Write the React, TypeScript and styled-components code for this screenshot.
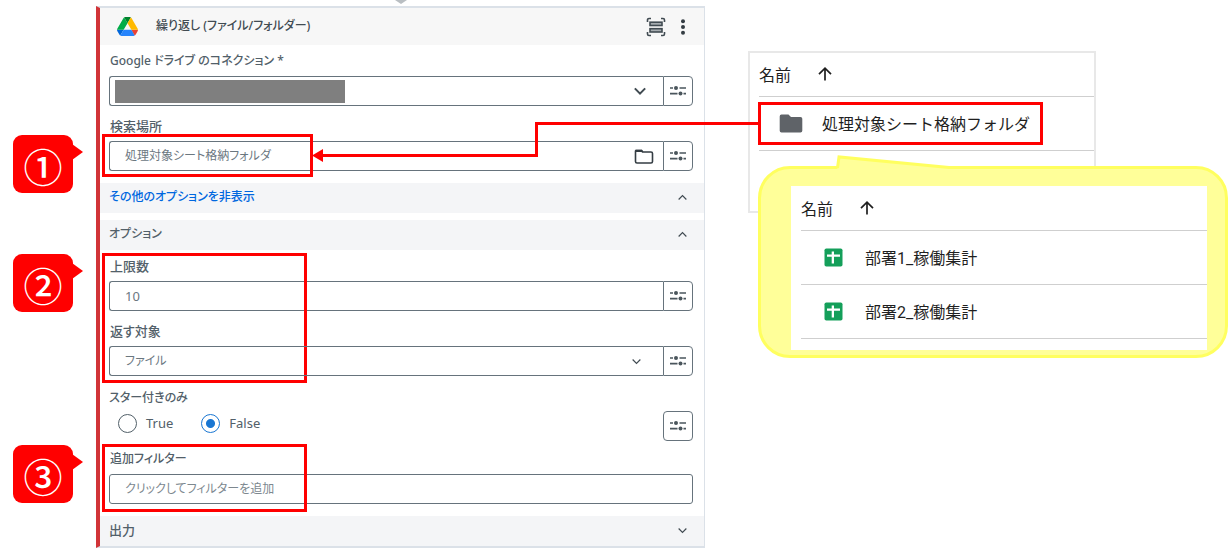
import React from "react";
import styled, { createGlobalStyle, css } from "styled-components";

const Global = createGlobalStyle`
  *, *::before, *::after { box-sizing: border-box; }
  body {
    margin: 0;
    background: #fff;
    font-family: "Noto Sans", "Noto Sans CJK JP", sans-serif;
    color: #526069;
  }
  button { font: inherit; color: inherit; padding: 0; margin: 0; cursor: pointer; }
  table { border-collapse: collapse; }
`;

const RED = "#ff0000";
const LINE = "#66737c";

const Page = styled.main`
  position: relative;
  display: grid;
  grid-template-columns: minmax(420px, 1fr) 480px;
  column-gap: 43px;
  align-items: start;
  padding: 6px 0 3px 96px;
  overflow: hidden;
`;

const StepArrow = styled.svg`
  position: absolute;
  top: 0;
  left: 395px;
`;

/* ---------- activity card ---------- */

const Card = styled.section`
  border: 1px solid #dbe1e8;
  border-top-width: 2px;
  border-bottom-width: 2px;
  border-left: 4px solid #d13438;
  background: #fff;
  font-size: 12px;
  font-feature-settings: "palt";
  line-height: 20px;
`;

const CardHeader = styled.header`
  display: flex;
  align-items: center;
  height: 37px;
  padding: 0 10px 0 17px;
  background: #f7f7f7;
`;

const CardTitle = styled.h1`
  flex: 1;
  margin: 0 0 0 18px;
  padding-bottom: 2px;
  font-size: 12px;
  font-weight: 500;
  color: #414b52;
`;

const IconButton = styled.button`
  display: grid;
  place-items: center;
  height: 24px;
  width: 22px;
  margin-left: 5px;
  border: 0;
  background: none;
`;

const Fields = styled.div`
  display: flex;
  flex-direction: column;
  gap: 11px;
  padding: 7px 11px 12px 9px;
`;

const Field = styled.div`
  position: relative;
  display: flex;
  flex-direction: column;
  gap: 4px;
`;

const Label = styled.label<{ $large?: boolean }>`
  height: 20px;
  padding-left: 1px;
  font-size: ${(p) => (p.$large ? 13 : 12)}px;
  line-height: 18px;
  font-weight: 500;
`;

const Row = styled.div`
  display: flex;
  height: 30px;
`;

const Box = styled.div<{ $alone?: boolean }>`
  flex: 1;
  min-width: 0;
  display: flex;
  align-items: center;
  border: 1px solid ${LINE};
  border-radius: ${(p) => (p.$alone ? "3px" : "3px 0 0 3px")};
  border-right-width: ${(p) => (p.$alone ? "1px" : "0")};
  padding: 0 8px 0 15px;
`;

const controlText = css`
  flex: 1;
  min-width: 0;
  height: 20px;
  padding: 0 0 1px;
  border: 0;
  outline: 0;
  background: transparent;
  font: inherit;
  font-feature-settings: inherit;
  color: #6b777f;
  &::placeholder { color: #7d888f; opacity: 1; }
`;

const TextInput = styled.input<{ $large?: boolean }>`
  ${controlText}
  font-size: ${(p) => (p.$large ? 13 : 12)}px;
`;

const Select = styled.select`
  ${controlText}
  appearance: none;
`;

const ConnectionSelect = styled(Select)`
  flex: 0 0 230px;
  height: 23px;
  margin: 0 auto 0 -10px;
  background: #7f7f7f;
`;

const BoxIcon = styled.span<{ $end: number }>`
  display: flex;
  margin-right: ${(p) => p.$end}px;
`;

const ModeButton = styled.button<{ $alone?: boolean }>`
  flex: none;
  display: grid;
  place-items: center;
  width: 30px;
  height: 30px;
  margin-top: ${(p) => (p.$alone ? 4 : 0)}px;
  border: 1px solid ${LINE};
  border-radius: ${(p) => (p.$alone ? "4px" : "0 4px 4px 0")};
  background: #fff;
`;

const SectionBar = styled.button<{ $link?: boolean; $large?: boolean }>`
  display: flex;
  align-items: center;
  justify-content: space-between;
  width: 100%;
  height: 30px;
  padding: 0 17px 2px 9px;
  border: 0;
  background: #f4f5f7;
  font-size: ${(p) => (p.$large ? 13 : 12)}px;
  font-weight: 500;
  font-feature-settings: inherit;
  color: ${(p) => (p.$link ? "#0067df" : "#526069")};
  & + & { margin-top: 7px; }
`;

const StarField = styled.fieldset`
  display: flex;
  min-width: 0;
  justify-content: space-between;
  align-items: flex-start;
  margin: 0 0 -2px;
  padding: 0;
  border: 0;
`;

const Legend = styled.legend`
  height: 20px;
  padding: 0;
  line-height: 22px;
  font-weight: 500;
`;

const Radios = styled.div`
  display: flex;
  gap: 28px;
  padding: 6px 0 0 9px;
`;

const RadioLabel = styled.label`
  display: flex;
  align-items: center;
  gap: 9px;
  height: 20px;
  font-size: 13px;
`;

const Radio = styled.input`
  appearance: none;
  width: 19px;
  height: 19px;
  margin: 0;
  border: 1px solid #526069;
  border-radius: 50%;
  &:checked {
    border-color: #1976d2;
    background: radial-gradient(circle, #1976d2 4px, transparent 5px);
  }
`;

/* ---------- annotations ---------- */

const Frame = styled.span<{ $w: number; $top: number; $bottom: number }>`
  position: absolute;
  left: -7px;
  top: ${(p) => p.$top}px;
  bottom: ${(p) => p.$bottom}px;
  width: ${(p) => p.$w}px;
  border: 3px solid ${RED};
  pointer-events: none;
`;

const Badge = styled.span<{ $top: number }>`
  position: absolute;
  left: -96px;
  top: ${(p) => p.$top}px;
  display: grid;
  place-items: center;
  width: 60px;
  height: 58px;
  border-radius: 9px;
  background: ${RED};
  color: #fff;
  font: 500 39px/60px "Noto Sans CJK JP", sans-serif;
  &::after {
    content: "";
    position: absolute;
    left: 59px;
    top: 9px;
    border-left: 11px solid ${RED};
    border-top: 8px solid transparent;
    border-bottom: 8px solid transparent;
  }
`;

const Connector = styled.div`
  position: absolute;
  left: 312px;
  right: 470px;
  top: 122px;
  height: 35px;
  display: grid;
  grid-template-columns: 1fr 1fr;
  &::before {
    content: "";
    align-self: end;
    margin-left: 8px;
    border-top: 3px solid ${RED};
  }
  &::after {
    content: "";
    border: solid ${RED};
    border-width: 3px 0 0 3px;
  }
`;

const ArrowHead = styled.svg`
  position: absolute;
  left: 0;
  bottom: -5px;
`;

/* ---------- drive listings ---------- */

const Side = styled.div`
  padding-top: 45px;
  font-family: Roboto, "Noto Sans CJK JP", sans-serif;
  font-size: 16px;
  color: #1f1f1f;
`;

const DrivePanel = styled.section`
  width: 348px;
  height: 162px;
  padding-left: 9px;
  border: 2px solid #e8e8e8;
`;

const Listing = styled.table`
  width: 100%;
  text-align: left;
  th, td { padding: 0; border-bottom: 1px solid #cfcfcf; }
  th { font-weight: 400; }
`;

const HeadCell = styled.div`
  display: flex;
  align-items: center;
  gap: 26px;
  height: 43px;
  padding-bottom: 2px;
`;

const FileCell = styled.div<{ $gap: number; $pad: number }>`
  position: relative;
  display: flex;
  align-items: center;
  gap: ${(p) => p.$gap}px;
  height: 53px;
  padding-left: ${(p) => p.$pad}px;
`;

const FileName = styled.span`
  padding-bottom: 2px;
`;

const FolderFrame = styled.span`
  position: absolute;
  left: -1px;
  top: 5px;
  width: 285px;
  height: 43px;
  border: 3px solid ${RED};
`;

const Callout = styled.section`
  position: relative;
  margin: -47px 0 0 10px;
  height: 192px;
  padding: 17px 18px 6px 30px;
  border: 3px solid #ffff5f;
  border-radius: 32px;
  background: #ffff99;
`;

const CalloutTail = styled.svg`
  position: absolute;
  left: 75px;
  top: -14px;
`;

const CalloutBody = styled.div`
  height: 164px;
  padding: 1px 0 0 10px;
  background: #fff;
`;

/* ---------- icons ---------- */

const DriveIcon = () => (
  <svg width="21" height="19" viewBox="0 0 87.3 78" aria-hidden="true">
    <path fill="#0066da" d="m6.6 66.85 3.85 6.65c.8 1.4 1.95 2.5 3.3 3.3l13.75-23.8h-27.5c0 1.55.4 3.1 1.2 4.5z" />
    <path fill="#00ac47" d="m43.65 25-13.75-23.8c-1.35.8-2.5 1.9-3.3 3.3l-25.4 44a9.06 9.06 0 0 0 -1.2 4.5h27.5z" />
    <path fill="#ea4335" d="m73.55 76.8c1.35-.8 2.5-1.9 3.3-3.3l1.6-2.75 7.65-13.25c.8-1.4 1.2-2.95 1.2-4.5h-27.502l5.852 11.5z" />
    <path fill="#00832d" d="m43.65 25 13.75-23.8c-1.35-.8-2.9-1.2-4.5-1.2h-18.5c-1.6 0-3.15.45-4.5 1.2z" />
    <path fill="#2684fc" d="m59.8 53h-32.3l-13.75 23.8c1.35.8 2.9 1.2 4.5 1.2h50.8c1.6 0 3.15-.45 4.5-1.2z" />
    <path fill="#ffba00" d="m73.4 26.5-12.7-22c-.8-1.4-1.95-2.5-3.3-3.3l-13.75 23.8 16.15 28h27.45c0-1.55-.4-3.1-1.2-4.5z" />
  </svg>
);

const CollapseIcon = () => (
  <svg width="20" height="20" viewBox="0 0 20 20" fill="none" stroke="#414b52" strokeWidth="1.6" aria-hidden="true">
    <path d="M1.500 5V3a1.500 1.500 0 0 1 1.500-1.500h2M15 1.500h2A1.500 1.500 0 0 1 18.500 3v2M18.500 15v2a1.500 1.500 0 0 1-1.500 1.500h-2M5 18.500H3A1.500 1.500 0 0 1 1.500 17v-2" />
    <rect x="4" y="5.200" width="12" height="3.300" fill="#a5abaf" />
    <rect x="4" y="11.700" width="12" height="3.300" fill="#a5abaf" />
  </svg>
);

const DotsIcon = () => (
  <svg width="6" height="18" viewBox="0 0 6 18" fill="#343d43" aria-hidden="true">
    <circle cx="3" cy="3.300" r="2" />
    <circle cx="3" cy="9" r="2" />
    <circle cx="3" cy="14.700" r="2" />
  </svg>
);

const SlidersIcon = () => (
  <svg width="16" height="12" viewBox="0 0 16 12" fill="#4a555c" aria-hidden="true">
    <path d="M0 2.200h3v1.600H0zM9.500 2.200H16v1.600H9.500zM0 7.800h7.500v1.600H0zM13.500 7.800H16v1.600h-2.500z" />
    <circle cx="6" cy="3" r="2" />
    <circle cx="10.500" cy="8.600" r="2" />
  </svg>
);

const Chevron = ({ up = false, size = 9, weight = 1.3 }: { up?: boolean; size?: number; weight?: number }) => (
  <svg width={size} height={size} viewBox="0 0 10 10" fill="none" stroke="#414b52" strokeWidth={weight} aria-hidden="true">
    <path d={up ? "M.7 7.200 5 2.800l4.300 4.400" : "M.7 2.800 5 7.200l4.300-4.400"} />
  </svg>
);

const FolderOutline = () => (
  <svg width="20" height="16" viewBox="0 0 20 16" aria-hidden="true">
    <path d="M2 2.500h5.500l1 1.500H17A1.500 1.500 0 0 1 18.500 5.500v8A1.500 1.500 0 0 1 17 15H3a1.500 1.500 0 0 1-1.500-1.500V3z" fill="none" stroke="#343d43" strokeWidth="1.600" />
    <path d="M1.500 1.700h6.500l1.500 2.300h-8z" fill="#343d43" />
  </svg>
);

const FolderSolid = () => (
  <svg width="24" height="19" viewBox="0 0 24 19" fill="#5f6368" aria-hidden="true">
    <path d="M3 .5h6.500L12 3h9.500A1.800 1.800 0 0 1 23.300 4.800v12a1.800 1.800 0 0 1-1.800 1.800H2.500A1.800 1.800 0 0 1 .700 16.800V2.500A2 2 0 0 1 3 .5z" />
  </svg>
);

const SheetIcon = () => (
  <svg width="19" height="19" viewBox="0 0 19 19" aria-hidden="true">
    <rect x=".5" y=".5" width="18" height="18" rx="1.800" fill="#149f5a" />
    <path d="M3 6.500h4.700V3.500h2.300V6.500h6v2.200h-6V15.500H7.700V8.700H3z" fill="#fff" />
  </svg>
);

const SortArrow = () => (
  <svg width="16" height="16" viewBox="0 0 16 16" fill="none" stroke="#1f1f1f" strokeWidth="1.700" aria-label="昇順">
    <path d="M8 14.500V2.500M2 8.200l6-6 6 6" />
  </svg>
);

const ModeToggle = ({ alone = false }: { alone?: boolean }) => (
  <ModeButton type="button" $alone={alone} aria-label="入力モード">
    <SlidersIcon />
  </ModeButton>
);

const files = ["部署1_稼働集計", "部署2_稼働集計"];

export default function App() {
  return (
    <Page>
      <Global />
      <StepArrow width="12" height="4" aria-hidden="true">
        <path d="M0 0h12L6 4z" fill="#b9bec2" />
      </StepArrow>

      <Card>
        <CardHeader>
          <DriveIcon />
          <CardTitle>繰り返し (ファイル/フォルダー)</CardTitle>
          <IconButton type="button" aria-label="折りたたむ"><CollapseIcon /></IconButton>
          <IconButton type="button" aria-label="メニュー"><DotsIcon /></IconButton>
        </CardHeader>

        <Fields>
          <Field>
            <Label htmlFor="connection">Google ドライブ のコネクション *</Label>
            <Row>
              <Box>
                <ConnectionSelect id="connection" />
                <BoxIcon $end={9}><Chevron size={12} weight={1.7} /></BoxIcon>
              </Box>
              <ModeToggle />
            </Row>
          </Field>
          <Field>
            <Label htmlFor="place" $large>検索場所</Label>
            <Row>
              <Box>
                <TextInput id="place" defaultValue="処理対象シート格納フォルダ" />
                <BoxIcon $end={1}><FolderOutline /></BoxIcon>
              </Box>
              <ModeToggle />
            </Row>
            <Frame $w={211} $top={17} $bottom={-6} />
            <Badge $top={18}>①</Badge>
          </Field>
        </Fields>

        <SectionBar type="button" $link>
          その他のオプションを非表示
          <Chevron up />
        </SectionBar>
        <SectionBar type="button">
          オプション
          <Chevron up />
        </SectionBar>

        <Fields>
          <Field>
            <Label htmlFor="limit" $large>上限数</Label>
            <Row>
              <Box>
                <TextInput id="limit" defaultValue="10" $large />
              </Box>
              <ModeToggle />
            </Row>
            <Frame $w={205} $top={-4} $bottom={-72} />
            <Badge $top={-3}>②</Badge>
          </Field>
          <Field>
            <Label htmlFor="target" $large>返す対象</Label>
            <Row>
              <Box>
                <Select id="target" defaultValue="file">
                  <option value="file">ファイル</option>
                </Select>
                <BoxIcon $end={14}><Chevron /></BoxIcon>
              </Box>
              <ModeToggle />
            </Row>
          </Field>
          <StarField>
            <Legend>スター付きのみ</Legend>
            <Radios>
              <RadioLabel><Radio type="radio" name="star" />True</RadioLabel>
              <RadioLabel><Radio type="radio" name="star" defaultChecked />False</RadioLabel>
            </Radios>
            <ModeToggle alone />
          </StarField>
          <Field>
            <Label htmlFor="filter">追加フィルター</Label>
            <Row>
              <Box $alone>
                <TextInput id="filter" placeholder="クリックしてフィルターを追加" />
              </Box>
            </Row>
            <Frame $w={205} $top={-6} $bottom={-8} />
            <Badge $top={-5}>③</Badge>
          </Field>
        </Fields>

        <SectionBar type="button" $large>
          出力
          <Chevron />
        </SectionBar>
      </Card>

      <Side>
        <DrivePanel>
          <Listing>
            <thead>
              <tr><th><HeadCell>名前 <SortArrow /></HeadCell></th></tr>
            </thead>
            <tbody>
              <tr>
                <td>
                  <FileCell $gap={19} $pad={20}>
                    <FolderSolid />
                    <FileName>処理対象シート格納フォルダ</FileName>
                    <FolderFrame />
                  </FileCell>
                </td>
              </tr>
            </tbody>
          </Listing>
        </DrivePanel>
        <Callout>
          <CalloutTail width="125" height="17" viewBox="0 0 125 17" aria-hidden="true">
            <path d="M1 17 3 2 113 12.500 125 17z" fill="#ffff99" />
            <path d="M1.500 13 3 2 113 12.500H125" fill="none" stroke="#ffff5f" strokeWidth="3" />
          </CalloutTail>
          <CalloutBody>
            <Listing>
              <thead>
                <tr><th><HeadCell>名前 <SortArrow /></HeadCell></th></tr>
              </thead>
              <tbody>
                {files.map((name) => (
                  <tr key={name}>
                    <td>
                      <FileCell $gap={22} $pad={23}>
                        <SheetIcon />
                        <FileName>{name}</FileName>
                      </FileCell>
                    </td>
                  </tr>
                ))}
              </tbody>
            </Listing>
          </CalloutBody>
        </Callout>
      </Side>

      <Connector>
        <ArrowHead width="11" height="13" aria-hidden="true">
          <path d="M0 6.500 11 0v13z" fill={RED} />
        </ArrowHead>
      </Connector>
    </Page>
  );
}
